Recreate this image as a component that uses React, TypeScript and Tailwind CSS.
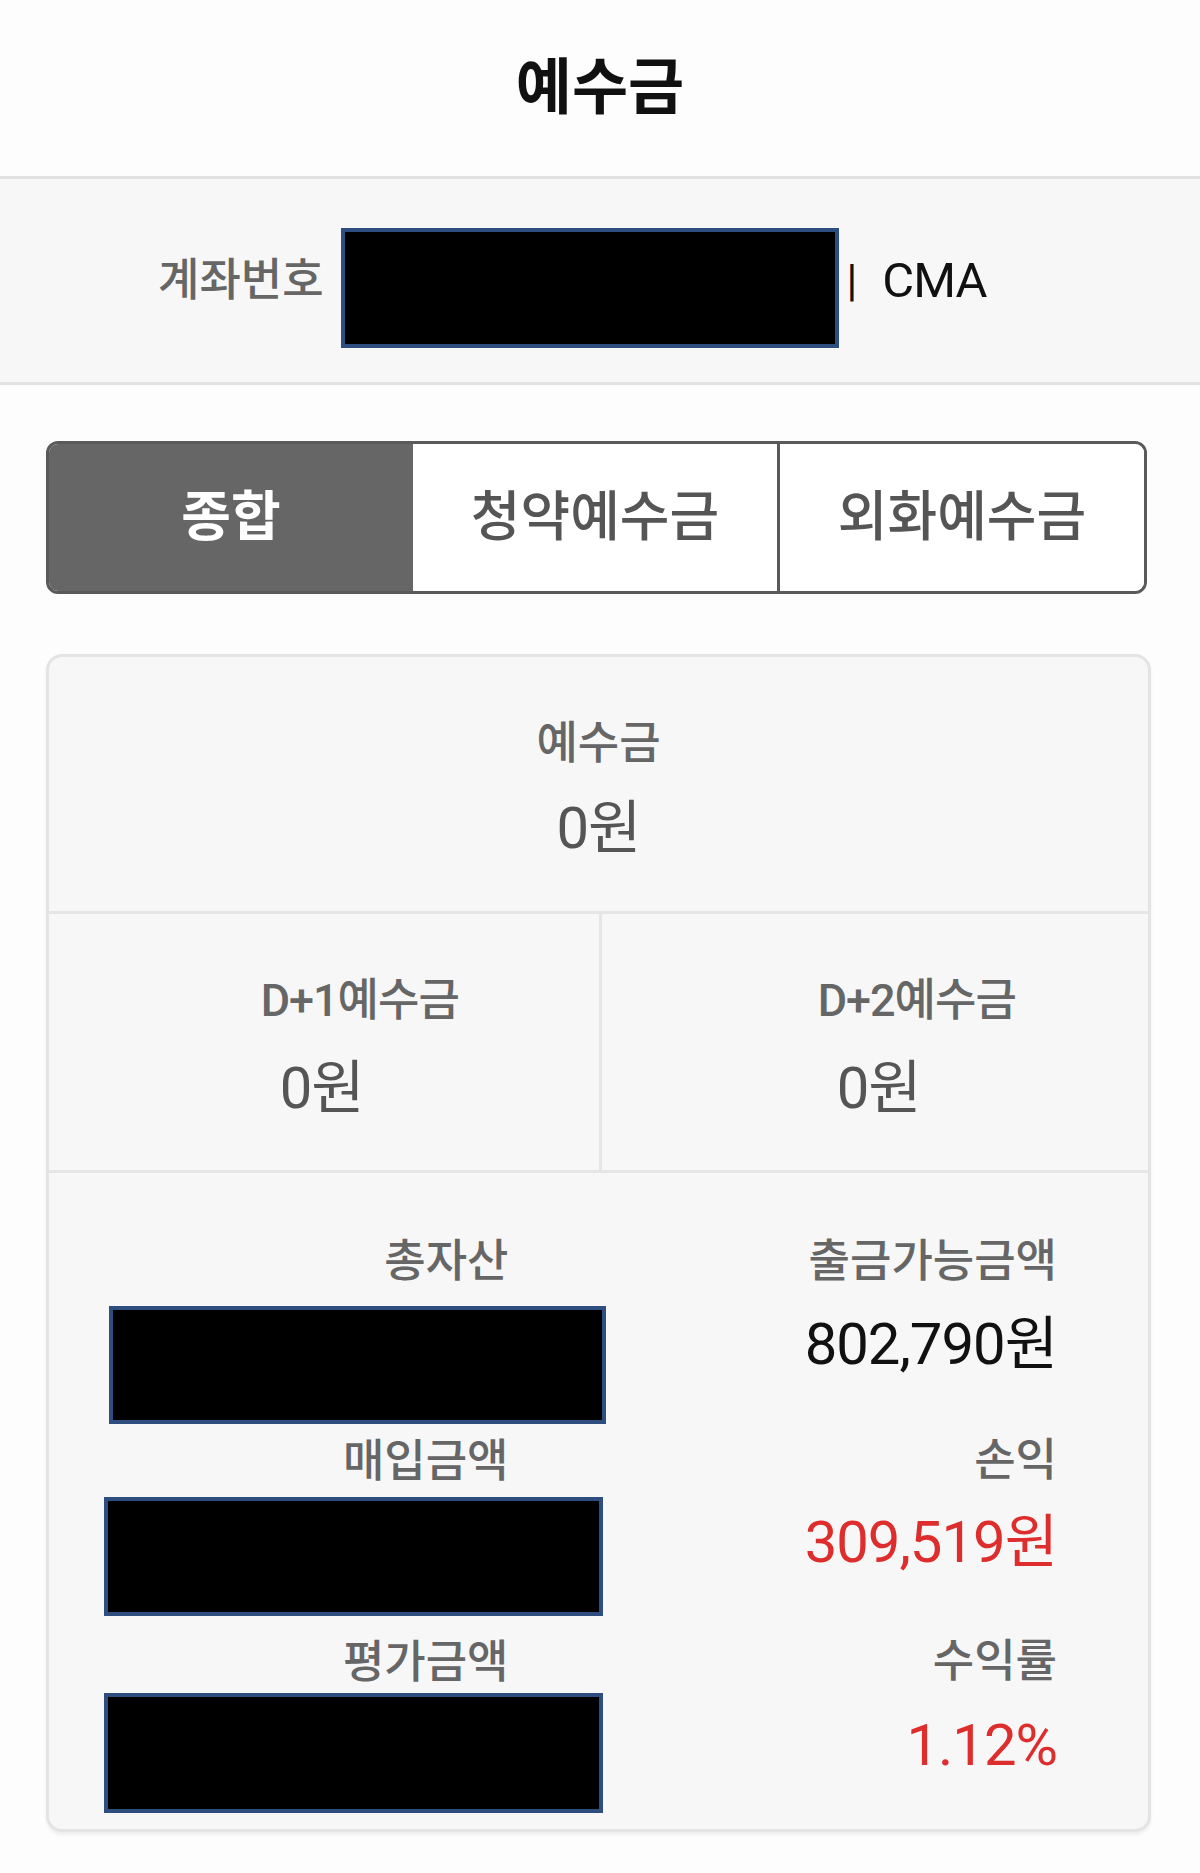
import React from 'react'

const font = { fontFamily: 'Roboto, "Noto Sans CJK KR", sans-serif' }

function Redacted({ className = '' }: { className?: string }) {
  return <div className={`border-[4px] border-[#2f4e80] bg-black ${className}`} />
}

const label = 'h-[50px] text-[45px] font-medium leading-[50px] text-[#666]'
const value = 'h-[60px] text-[58px] leading-[60px] tracking-[-1px]'

export default function App() {
  const tabs = ['종합', '청약예수금', '외화예수금']

  return (
    <div className="min-h-screen w-[1200px] bg-[#fdfdfd]" style={font}>
      {/* Header */}
      <div className="flex h-[176px] items-center justify-center">
        <h1 className="text-[61px] font-bold leading-none text-[#111]">예수금</h1>
      </div>

      {/* Account */}
      <div className="flex h-[209px] items-center border-y-[3px] border-[#e2e2e2] bg-[#f7f7f7] pl-[158px]">
        <span className="text-[45px] font-medium leading-none text-[#666]">계좌번호</span>
        <Redacted className="ml-[17px] mt-[14px] h-[120px] w-[498px]" />
        <span className="ml-[8px] text-[44px] leading-none text-[#111]">|</span>
        <span className="ml-[25px] text-[49px] leading-none tracking-[-1px] text-[#111]">CMA</span>
      </div>

      {/* Tabs */}
      <div className="ml-[46px] mr-[53px] mt-[56px] flex h-[153px] overflow-hidden rounded-[12px] border-[3px] border-[#5a5a5a]">
        {tabs.map((t, i) => (
          <div
            key={t}
            className={`flex flex-1 items-center justify-center text-[54px] leading-none ${
              i === 0 ? 'bg-[#666] font-bold text-white' : 'bg-white font-medium text-[#555]'
            } ${i === 2 ? 'border-l-[3px] border-[#5a5a5a]' : ''}`}
          >
            {t}
          </div>
        ))}
      </div>

      {/* Summary card */}
      <div className="ml-[46px] mr-[49px] mt-[60px] overflow-hidden rounded-[16px] border-[3px] border-[#e4e4e4] bg-[#f7f7f7] shadow-[0_3px_3px_rgba(0,0,0,0.06)]">
        <div className="flex h-[254px] flex-col items-center pt-[62px]">
          <span className={label}>예수금</span>
          <span className={`mt-[29px] text-[#555] ${value}`}>0원</span>
        </div>

        <div className="grid h-[262px] grid-cols-2 border-y-[3px] border-[#e6e6e6]">
          {['D+1예수금', 'D+2예수금'].map((l, i) => (
            <div
              key={l}
              className={`flex flex-col items-center pt-[62px] ${i === 1 ? 'border-l-[3px] border-[#e6e6e6] pl-[84px]' : 'pl-[72px]'}`}
            >
              <span className={`${label} tracking-[-1px]`}>{l}</span>
              <span className={`mt-[32px] pr-[76px] text-[#555] ${value}`}>0원</span>
            </div>
          ))}
        </div>

        <div className="grid grid-cols-2 pb-[16px] pt-[64px]">
          <div className="flex flex-col items-end pr-[90px]">
            <span className={label}>총자산</span>
            <Redacted className="mt-[19px] ml-[60px] h-[118px] w-[497px] self-start" />
            <span className={`mt-[13px] ${label}`}>매입금액</span>
            <Redacted className="mt-[10px] ml-[55px] h-[119px] w-[499px] self-start" />
            <span className={`mt-[22px] ${label}`}>평가금액</span>
            <Redacted className="mt-[5px] ml-[55px] h-[120px] w-[499px] self-start" />
          </div>
          <div className="flex flex-col items-end pr-[91px]">
            <span className={label}>출금가능금액</span>
            <span className={`mt-[27px] text-[#111] ${value}`}>802,790원</span>
            <span className={`mt-[62px] ${label}`}>손익</span>
            <span className={`mt-[26px] text-[#de2d2d] ${value}`}>309,519원</span>
            <span className={`mt-[65px] ${label}`}>수익률</span>
            <span className={`mt-[28px] text-[#de2d2d] ${value}`}>1.12%</span>
          </div>
        </div>
      </div>
    </div>
  )
}
